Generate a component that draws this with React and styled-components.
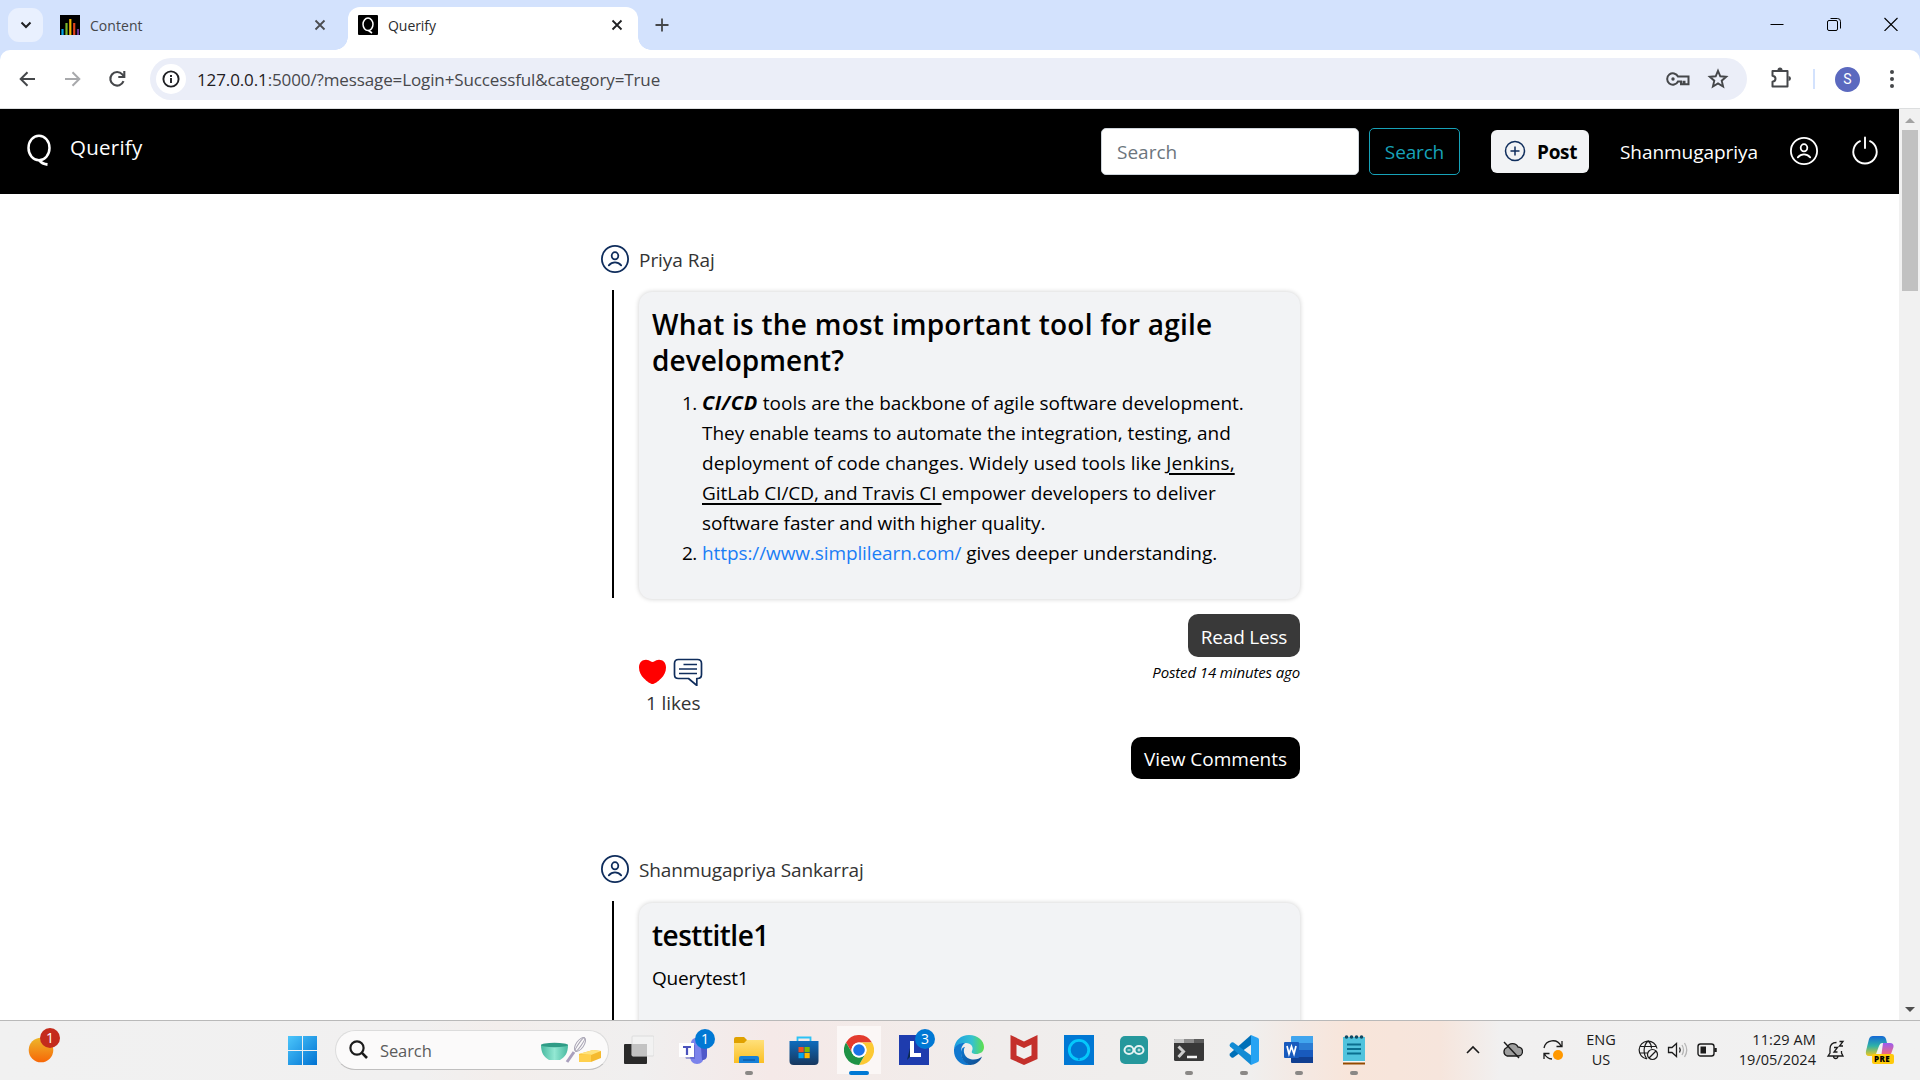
import React from "react";
import styled, { createGlobalStyle, css } from "styled-components";

const Global = createGlobalStyle`
  * { box-sizing: border-box; }
  html, body { margin: 0; padding: 0; overflow: hidden; background: #fff; }
  body { font-family: "Open Sans", "Noto Sans", sans-serif; font-size: 19px; line-height: 30px; color: #000; }
  svg { display: block; flex: none; }
`;

const Screen = styled.div`
  width: 1920px;
  height: 1080px;
  display: flex;
  flex-direction: column;
  overflow: hidden;
`;

const T = styled.span`
  white-space: nowrap;
  letter-spacing: ${(p) => p.$ls || 0}px;
`;

/* ---------- browser chrome ---------- */
const TabStrip = styled.div`
  height: 50px;
  flex: none;
  background: #d3e2fd;
  display: flex;
  align-items: flex-start;
  padding-left: 8px;
`;
const TabMenu = styled.div`
  width: 35px;
  height: 34px;
  margin-top: 8px;
  border-radius: 11px;
  background: #e9f0fe;
  display: flex;
  align-items: center;
  justify-content: center;
`;
const Tab = styled.div`
  position: relative;
  display: flex;
  align-items: center;
  height: 43px;
  margin-top: 7px;
  width: ${(p) => p.$w}px;
  padding: 0 14px 7px ${(p) => p.$pl}px;
  font-size: 14px;
  color: #45474a;
  ${(p) =>
    p.$active &&
    css`
      background: #fff;
      border-radius: 12px 12px 0 0;
      color: #2b2c2e;
      &::before,
      &::after {
        content: "";
        position: absolute;
        bottom: 0;
        width: 13px;
        height: 13px;
      }
      &::before {
        left: -13px;
        background: radial-gradient(circle at 0 0, #d3e2fd 12.5px, #fff 13px);
      }
      &::after {
        right: -13px;
        background: radial-gradient(circle at 100% 0, #d3e2fd 12.5px, #fff 13px);
      }
    `}
`;
const TabTitle = styled(T)`
  flex: 1;
  margin-left: 10px;
  padding-top: 1px;
`;
const NewTab = styled.div`
  margin: 18px 0 0 17px;
`;
const WindowButtons = styled.div`
  display: flex;
  gap: 43px;
  margin: 17px 22px 0 auto;
`;
const ToolbarBack = styled.div`
  background: #d3e2fd;
  height: 59px;
  flex: none;
`;
const Toolbar = styled.div`
  height: 59px;
  background: #fff;
  border-radius: 10px 10px 0 0;
  border-bottom: 1px solid #dcdedf;
  display: flex;
  align-items: center;
  padding: 0 19px 0 17px;
`;
const NavIcons = styled.div`
  display: flex;
  gap: 24px;
  margin-right: 22px;
`;
const UrlBar = styled.div`
  height: 42px;
  width: 1597px;
  border-radius: 21px;
  background: #ebeef8;
  display: flex;
  align-items: center;
  padding: 0 18px 0 6px;
`;
const SiteInfo = styled.div`
  width: 30px;
  height: 30px;
  border-radius: 50%;
  background: #fff;
  display: flex;
  align-items: center;
  justify-content: center;
  margin-right: 11px;
`;
const Url = styled(T)`
  flex: 1;
  padding-top: 1px;
  font-size: 17px;
  color: #47484c;
  b { font-weight: 400; color: #1f2023; }
`;
const UrlIcons = styled.div`
  display: flex;
  align-items: center;
  gap: 17px;
`;
const ToolbarDivider = styled.div`
  width: 2px;
  height: 20px;
  background: #d3e2fd;
  margin: 0 20px 0 20px;
`;
const Avatar = styled.div`
  width: 25px;
  height: 25px;
  border-radius: 50%;
  background: #5b69bf;
  color: #fff;
  font: 14px/25px Roboto, sans-serif;
  text-align: center;
  margin-right: 23px;
`;

/* ---------- page ---------- */
const Viewport = styled.div`
  height: 911px;
  flex: none;
  display: flex;
`;
const Page = styled.div`
  width: 1899px;
  height: 911px;
  overflow: hidden;
`;
const Scrollbar = styled.div`
  width: 21px;
  background: #f1f1f1;
  display: flex;
  flex-direction: column;
  align-items: center;
  justify-content: space-between;
  padding: 9px 0 8px;
`;
const Thumb = styled.div`
  width: 16px;
  height: 161px;
  margin: 7px 0 auto;
  background: #c1c1c1;
`;
const Navbar = styled.header`
  height: 85px;
  background: #000;
  color: #fff;
  display: flex;
  align-items: center;
  padding: 0 20px 1px 26px;
`;
const Brand = styled(T)`
  font-size: 20.5px;
  margin: -8px auto 0 17px;
`;
const SearchField = styled.div`
  width: 258px;
  height: 47px;
  border: 1px solid #ced4da;
  border-radius: 5px;
  background: #fff;
  color: #6c757d;
  padding: 8px 15px;
  line-height: 30px;
`;
const SearchButton = styled.div`
  width: 91px;
  height: 47px;
  margin-left: 10px;
  border: 1px solid #17a2b8;
  border-radius: 5px;
  color: #17a2b8;
  line-height: 46px;
  text-align: center;
`;
const PostButton = styled.div`
  width: 98px;
  height: 43px;
  margin: 0 31px 0 31px;
  border-radius: 6px;
  background: #f2f3f5;
  color: #000;
  font-weight: 700;
  display: flex;
  align-items: center;
  padding-left: 13px;
  gap: 11px;
`;
const Lowered = styled(T)`
  padding-top: 2px;
`;
const NavUser = styled(Lowered)`
  width: 138px;
  margin-right: 31px;
`;
const NavGap = styled.div`
  width: 32px;
`;
const Feed = styled.main`
  width: 702px;
  margin-left: 600px;
  padding-top: 50px;
`;
const Author = styled.div`
  height: 30px;
  display: flex;
  align-items: center;
  gap: 9px;
  color: #333;
  margin-bottom: ${(p) => p.$mb}px;
`;
const Thread = styled.div`
  display: flex;
  align-items: flex-start;
`;
const ThreadLine = styled.div`
  width: 2px;
  height: 308px;
  margin: -2px 25px 0 12px;
  background: #000;
`;
const Card = styled.section`
  width: 661px;
  height: 307px;
  border-radius: 13px;
  background: #f2f3f5;
  box-shadow: 0 0 5px rgba(0, 0, 0, 0.2);
  padding: 14px 13px;
`;
const Title = styled.h3`
  margin: 0 0 10px;
  font-size: 28px;
  font-weight: 600;
  line-height: 36px;
`;
const Answers = styled.div`
  display: grid;
  grid-template-columns: 50px 1fr;
`;
const Marker = styled.div`
  padding-left: 30px;
  letter-spacing: -0.5px;
`;
const Line = styled(T)`
  display: block;
  height: 30px;
  u { text-decoration-thickness: 2px; text-underline-offset: 3px; }
`;
const Strong = styled.em`
  font-weight: 700;
  font-size: 20px;
  letter-spacing: 0.6px;
  line-height: 1;
`;
const Link = styled.a`
  color: #1a7df5;
  letter-spacing: -0.1px;
`;
const PostFooter = styled.div`
  display: flex;
  justify-content: space-between;
  margin: 15px 2px 75px 38px;
  height: 165px;
`;
const Reactions = styled.div`
  padding-top: 44px;
  color: #333;
`;
const ReactionIcons = styled.div`
  display: flex;
  gap: 6px;
  margin-bottom: 2px;
`;
const LikeCount = styled(T)`
  margin-left: 8px;
`;
const PostActions = styled.div`
  display: flex;
  flex-direction: column;
  align-items: flex-end;
`;
const ActionButton = styled.div`
  width: ${(p) => p.$w}px;
  height: ${(p) => p.$h}px;
  border-radius: 10px;
  background: ${(p) => p.$bg};
  color: #fff;
  text-align: center;
  line-height: ${(p) => p.$h + 3}px;
`;
const Posted = styled(T)`
  font-size: 15px;
  font-style: italic;
  line-height: 30px;
  height: 80px;
`;

/* ---------- taskbar ---------- */
const Taskbar = styled.footer`
  height: 60px;
  flex: none;
  border-top: 1px solid #b9b9b9;
  background: linear-gradient(90deg, #f1f1f1 0, #f1f0f0 420px, #f3eeec 500px, #f0efef 640px, #f5e9e8 770px, #f3ebe9 870px, #f0edec 1000px, #f0efee 1250px, #f4e9e3 1300px, #f8e5da 1350px, #f6e5dc 1440px, #f1f0f0 1500px, #f1f1f1 100%);
  display: flex;
  align-items: center;
  padding: 0 0 1px 26px;
`;
const Widget = styled.div`
  width: 262px;
`;
const TaskSearch = styled.div`
  width: 274px;
  height: 40px;
  border-radius: 20px;
  border: 1px solid #dcdcdc;
  border-bottom-color: #c0bfbf;
  background: #fbfafa;
  display: flex;
  align-items: center;
  padding: 0 6px 0 13px;
  margin: 0 2px 0 17px;
  font-size: 16.5px;
  color: #5c5c5c;
`;
const TaskSearchText = styled(T)`
  flex: 1;
  margin-left: 11px;
  padding-top: 1px;
`;
const AppCell = styled.div`
  position: relative;
  width: 55px;
  height: 58px;
  display: flex;
  align-items: center;
  justify-content: center;
  ${(p) =>
    p.$state === "active" &&
    css`
      background: linear-gradient(#fbf7f6, #fbf7f6) center / 44px 48px no-repeat;
    `}
  ${(p) =>
    p.$state &&
    css`
      &::after {
        content: "";
        position: absolute;
        bottom: 4px;
        width: ${p.$state === "active" ? 20 : 8}px;
        height: 4px;
        border-radius: 2px;
        background: ${p.$state === "active" ? "#0078d4" : "#8a8886"};
      }
    `}
`;
const Badge = styled.div`
  position: absolute;
  z-index: 1;
  left: 29px;
  top: 8px;
  width: 20px;
  height: 20px;
  border-radius: 50%;
  background: #0078d4;
  color: #fff;
  font-size: 14px;
  line-height: 20px;
  text-align: center;
`;
const RedBadge = styled(Badge)`
  left: 14px;
  top: -9px;
  background: #c42b1c;
`;
const WidgetIcon = styled.div`
  position: relative;
  width: 30px;
`;
const Tray = styled.div`
  flex: 1;
  display: flex;
  align-items: center;
  padding-left: 84px;
`;
const TraySlot = styled.div`
  width: ${(p) => p.$w}px;
  margin-right: ${(p) => p.$mr || 0}px;
`;
const Stack = styled.div`
  width: ${(p) => p.$w}px;
  margin-right: ${(p) => p.$mr}px;
  display: flex;
  flex-direction: column;
  align-items: ${(p) => p.$align};
  font-size: 14.5px;
  line-height: 20px;
  padding-bottom: 1px;
  color: #1b1b1b;
`;

/* ---------- icons ---------- */
const UserIcon = ({ color = "#0f2d5c" }) => (
  <svg width="30" height="30" viewBox="0 0 30 30" fill="none" stroke={color} strokeWidth="1.8" strokeLinecap="round">
    <circle cx="15" cy="15" r="13.1" />
    <ellipse cx="15" cy="11.8" rx="3.3" ry="3.6" />
    <path d="M8.8 21.4C10.5 19.4 12.6 18.4 15 18.4s4.500 1 6.200 3" />
  </svg>
);
const Cross = ({ c }) => (
  <svg width="14" height="14" viewBox="0 0 14 14" stroke={c} strokeWidth="1.8">
    <path d="M2.5 2.5l9 9M11.5 2.5l-9 9" />
  </svg>
);

const apps = [
  { name: "taskview", icon: (
    <svg width="30" height="30"><rect x="0" y="9" width="23" height="20" rx="1" fill="#2a2a2a" /><rect x="8" y="1" width="22" height="20" rx="1" fill="#f2f2f2" stroke="#dcdcdc" /><path d="M8 9h15v12H8z" fill="#c3c3c3" /></svg>
  ) },
  { name: "teams", badge: "1", icon: (
    <svg width="30" height="30"><circle cx="17" cy="8" r="5" fill="#7b83eb" /><path d="M11 12h14v9c0 5-3 8-7 8s-7-3-7-8z" fill="#7b83eb" /><path d="M22 12h6v8c0 4-2 5-5 5z" fill="#5059c9" /><path d="M2 10h14v14H7z" fill="#4b53bc" opacity=".5" /><rect x="0" y="8" width="15" height="14" fill="#fff" /><path d="M4 11h8v2H9.100v7H6.900v-7H4z" fill="#4b53bc" /></svg>
  ) },
  { name: "explorer", state: "open", icon: (
    <svg width="30" height="30"><path d="M0 4a2 2 0 0 1 2-2h8l3 3v5H0z" fill="#e0a100" /><path d="M0 8h10l3-3h17v23H0z" fill="url(#fold)" /><path d="M5 23a2 2 0 0 1 2-2h16a2 2 0 0 1 2 2v5H5z" fill="#1680d8" /><path d="M9 25h12" stroke="#0a4a90" /><defs><linearGradient id="fold" x2="0" y2="1"><stop stopColor="#ffe07a" /><stop offset="1" stopColor="#fbbf24" /></linearGradient></defs></svg>
  ) },
  { name: "store", icon: (
    <svg width="30" height="30"><path d="M8.500 7V2.500h13V7" fill="none" stroke="#2cc2f5" strokeWidth="1.8" /><path d="M.5 6h29v20q0 4-4 4h-21q-4 0-4-4z" fill="url(#st)" /><path d="M9.500 12h5.200v5.200H9.500z" fill="#f25022" /><path d="M15.500 12h5.200v5.200h-5.200z" fill="#7fba00" /><path d="M9.500 18h5.200v5.200H9.500z" fill="#00a4ef" /><path d="M15.500 18h5.200v5.200h-5.200z" fill="#ffb900" /><defs><linearGradient id="st" x2="0" y2="1"><stop stopColor="#0f6cbd" /><stop offset="1" stopColor="#17375e" /></linearGradient></defs></svg>
  ) },
  { name: "chrome", state: "active", icon: (
    <svg width="30" height="30" viewBox="0 0 48 48"><circle cx="24" cy="24" r="24" fill="#fff" /><path d="M3.200 12A24 24 0 0 1 44.800 12H24a12 12 0 0 0-10.400 18z" fill="#e33b2e" /><path d="M44.800 12A24 24 0 0 1 24 48l10.400-18A12 12 0 0 0 24 12z" fill="#fcc934" /><path d="M24 48A24 24 0 0 1 3.200 12l10.400 18a12 12 0 0 0 20.800 0z" fill="#1e9245" /><circle cx="24" cy="24" r="12" fill="#fff" /><circle cx="24" cy="24" r="9.300" fill="#1a73e8" /></svg>
  ) },
  { name: "l", badge: "3", icon: (
    <svg width="30" height="30"><rect width="30" height="30" fill="#1e3cae" /><path d="M8 25l4-16v12z" fill="#0c2a50" /><path d="M11 6h4v12h7v4H11z" fill="#fff" /></svg>
  ) },
  { name: "edge", icon: (
    <svg width="30" height="30"><defs><linearGradient id="e1" x2="1" y2="0"><stop stopColor="#1b9de2" /><stop offset=".6" stopColor="#35c1d0" /><stop offset="1" stopColor="#5fe04a" /></linearGradient><linearGradient id="e2" x2="1" y2="1"><stop stopColor="#0d7ad4" /><stop offset="1" stopColor="#114a8b" /></linearGradient></defs><path d="M0 14C1 5 7 0 15 0c9 0 15 6 15 12 0 5-4 7-8 7-3 0-5-1-4-3 2-4-1-8-6-8-6 0-10 3-12 6z" fill="url(#e1)" /><path d="M0 14c2-4 6-6.500 11-6C8 10 7 13 7 17c0 7 5 12 11 12.700C8 32 0 25 0 16z" fill="#1178cf" /><path d="M11 12c-2 2-2 10 5 12 5 1.500 9 0 12-2.500C26 27 21 30 16 30 10 28 7 23 7 18c0-4 2-6 4-6z" fill="url(#e2)" /></svg>
  ) },
  { name: "mcafee", icon: (
    <svg width="28" height="30"><path d="M.5 0L14 6.500 27.500 0v24L14 30 .5 24z" fill="#c4302b" /><path d="M6.500 9.500L14 13l7.500-3.500v11L14 24l-7.500-3.500z" fill="#f1efee" /></svg>
  ) },
  { name: "alexa", icon: (
    <svg width="30" height="30"><rect width="30" height="30" fill="#0078d4" /><circle cx="15" cy="15" r="9.700" fill="none" stroke="#05c8fb" strokeWidth="2.800" /><path d="M13.500 23.500l1.500 2 1-2z" fill="#0078d4" /></svg>
  ) },
  { name: "arduino", icon: (
    <svg width="28" height="28"><rect width="28" height="28" rx="5" fill="#26989c" /><g fill="none" stroke="#e8f3f3" strokeWidth="2"><ellipse cx="9" cy="14" rx="4.500" ry="4" /><ellipse cx="19" cy="14" rx="4.500" ry="4" /><path d="M7.500 14h3M17.500 14h3M19 12.500v3" strokeWidth="1" /></g></svg>
  ) },
  { name: "terminal", state: "open", icon: (
    <svg width="30" height="30"><rect y="4" width="30" height="22" rx="1.500" fill="#383838" /><path d="M1 4h9v4H0V5z" fill="#c6c6c6" /><path d="M10 4h10v4H10z" fill="#8c8c8c" /><path d="M20 4h10v4H20z" fill="#5b5b5b" /><path d="M4.500 11.500l5 5-5 5.500" fill="none" stroke="#ccc" strokeWidth="3" /><path d="M13 22h10" stroke="#f4f4f4" strokeWidth="2.500" /></svg>
  ) },
  { name: "vscode", state: "open", icon: (
    <svg width="30" height="30"><path d="M22 0L1 18.500q-1 1.500 0 2.500l1.500 1.500q1 .5 2 0L23 9z" fill="#0070b8" /><path d="M22 30L1 11.500Q0 10 1 9l1.500-1.500q1-.5 2 0L23 21z" fill="#128bd4" /><path d="M22 0l7 3q1 .5 1 2v20q0 1.500-1 2l-7 3V0z" fill="#27a3f3" /></svg>
  ) },
  { name: "word", state: "open", icon: (
    <svg width="30" height="30"><path d="M7 2q0-1 1-1h21v7H7z" fill="#41a5ee" /><path d="M7 8h22v7H7z" fill="#2b7cd3" /><path d="M7 15h22v7H7z" fill="#185abd" /><path d="M7 22h22v6H8q-1 0-1-1z" fill="#103f91" /><rect x="0" y="7" width="15" height="16" rx="1" fill="#185abd" /><path d="M3 11l2 8 2.500-7.500L10 19l2-8" fill="none" stroke="#fff" strokeWidth="1.700" /></svg>
  ) },
  { name: "notepad", state: "open", icon: (
    <svg width="24" height="30"><path d="M1 2h22v25H1z" fill="#50c3dd" /><path d="M1 27h22v2.500H1z" fill="#944a00" /><path d="M1 26h22v1.500H1z" fill="#f6f6f6" /><path d="M5 9.500h14M5 14h14M5 18.500h14" stroke="#0a6f8f" strokeWidth="2" /><g fill="#124a63"><circle cx="4.500" cy="2" r="1.800" /><circle cx="9.500" cy="2" r="1.800" /><circle cx="14.500" cy="2" r="1.800" /><circle cx="19.500" cy="2" r="1.800" /></g></svg>
  ) },
];

function BrowserChrome() {
  return (
    <>
      <TabStrip>
        <TabMenu>
          <svg width="12" height="12" fill="none" stroke="#1f2023" strokeWidth="2"><path d="M1.500 3.500L6 8l4.500-4.500" /></svg>
        </TabMenu>
        <Tab $w={305} $pl={17}>
          <svg width="20" height="20"><rect width="20" height="20" fill="#000" /><path d="M2.500 20v-6" stroke="#00a3e8" strokeWidth="2.200" /><path d="M6.500 20V8" stroke="#7ab829" strokeWidth="2.200" /><path d="M10.300 20V4" stroke="#f2b400" strokeWidth="2.200" /><path d="M14.200 20V8" stroke="#e0421b" strokeWidth="2.200" /><path d="M18 20v-6" stroke="#6a3494" strokeWidth="2.200" /></svg>
          <TabTitle $ls={0.05}>Content</TabTitle>
          <svg width="26" height="14" stroke="#4a4c50" strokeWidth="1.8"><path d="M7.500 2.500l9 9M16.500 2.500l-9 9" /></svg>
        </Tab>
        <Tab $active $w={290} $pl={10}>
          <svg width="20" height="20"><rect width="20" height="20" rx="1" fill="#000" /><ellipse cx="10" cy="9.300" rx="5" ry="6.200" fill="none" stroke="#fff" strokeWidth="1.500" /><path d="M10.500 15.500l3.500 2.500" stroke="#fff" strokeWidth="1.600" /></svg>
          <TabTitle $ls={-0.05}>Querify</TabTitle>
          <Cross c="#202124" />
        </Tab>
        <NewTab>
          <svg width="14" height="14" stroke="#45474a" strokeWidth="1.800"><path d="M7 .5v13M.5 7h13" /></svg>
        </NewTab>
        <WindowButtons>
          <svg width="14" height="14" stroke="#000" strokeWidth="1"><path d="M.5 7.500h13" /></svg>
          <svg width="14" height="14" fill="none" stroke="#000"><rect x=".5" y="3.500" width="10" height="10" rx="1.500" /><path d="M3.500 1.500h7q3 0 3 3v7" /></svg>
          <svg width="14" height="14" stroke="#000" strokeWidth="1.100"><path d="M.5 1l13 13M13.500 1l-13 13" /></svg>
        </WindowButtons>
      </TabStrip>
      <ToolbarBack>
        <Toolbar>
          <NavIcons>
            <svg width="21" height="20" fill="none" stroke="#45474a" strokeWidth="2"><path d="M18 10H4M10.500 3.200L3.700 10l6.800 6.800" /></svg>
            <svg width="21" height="20" fill="none" stroke="#a8a9ac" strokeWidth="2"><path d="M3 10h14M10.500 3.200l6.800 6.800-6.800 6.800" /></svg>
            <svg width="21" height="20" fill="none" stroke="#45474a" strokeWidth="2.100"><path d="M16.500 12.200A6.800 6.800 0 1 1 15.300 5.400L17 7.200" /><path d="M17.300 2v6h-6" /></svg>
          </NavIcons>
          <UrlBar>
            <SiteInfo>
              <svg width="18" height="18" fill="none" stroke="#1f2023" strokeWidth="1.900"><circle cx="9" cy="9" r="7.600" /><path d="M9 8v5M9 5v2" /></svg>
            </SiteInfo>
            <Url $ls={-0.12}><b>127.0.0.1</b>:5000/?message=Login+Successful&amp;category=True</Url>
            <UrlIcons>
              <svg width="24" height="16" fill="none" stroke="#45474a" strokeWidth="2"><path d="M12 5.500A5.700 5.700 0 1 0 12 10.500H15V13.300h2.500v-2.500h1v2.500H22.500v-7.800z" /><circle cx="7" cy="8" r="1.700" fill="#45474a" stroke="none" /></svg>
              <svg width="22" height="22" fill="none" stroke="#45474a" strokeWidth="1.900"><path d="M11 2.800l2.300 5.500 5.900.5-4.500 3.900 1.400 5.800L11 15.400l-5.100 3.100 1.400-5.800-4.500-3.900 5.900-.5z" /></svg>
            </UrlIcons>
          </UrlBar>
          <svg width="46" height="24" viewBox="-22 0 46 24" fill="none" stroke="#45474a" strokeWidth="2"><path d="M3.500 4h15v15.500h-15v-4.700q3-.5 3-3t-3-3z" strokeLinejoin="round" /><path d="M8.500 3a2.500 2.500 0 0 1 5 0zM19.500 9a2.500 2.500 0 0 1 0 5z" fill="#45474a" stroke="none" /></svg>
          <ToolbarDivider />
          <Avatar>S</Avatar>
          <svg width="18" height="20" fill="#45474a"><circle cx="9" cy="3" r="2" /><circle cx="9" cy="10" r="2" /><circle cx="9" cy="17" r="2" /></svg>
        </Toolbar>
      </ToolbarBack>
    </>
  );
}

function TopNav() {
  return (
    <Navbar>
      <svg width="27" height="34" viewBox="0 0 27 34" fill="none" stroke="#fff"><ellipse cx="13" cy="14" rx="10.500" ry="12.300" strokeWidth="2.500" /><path d="M13.500 26.500q2.500 3.500 8 4" strokeWidth="2.900" /></svg>
      <Brand $ls={0.25}>Querify</Brand>
      <SearchField><T>Search</T></SearchField>
      <SearchButton><T $ls={-0.15}>Search</T></SearchButton>
      <PostButton>
        <svg width="22" height="22" fill="none" stroke="#0f2d5c" strokeWidth="1.500"><circle cx="11" cy="11" r="9.500" /><path d="M11 6.500v9M6.500 11h9" /></svg>
        <Lowered $ls={-0.3}>Post</Lowered>
      </PostButton>
      <NavUser $ls={-0.05}>Shanmugapriya</NavUser>
      <UserIcon color="#fff" />
      <NavGap />
      <svg width="28" height="30" fill="none" stroke="#fff" strokeWidth="1.900" strokeLinecap="round"><path d="M14 1.500v10.500" /><path d="M9 5.200A11.700 11.700 0 1 0 19 5.200" /></svg>
    </Navbar>
  );
}

function FeedView() {
  return (
    <Feed>
      <Author $mb={18}><UserIcon /><Lowered $ls={-0.05}>Priya Raj</Lowered></Author>
      <Thread>
        <ThreadLine />
        <Card>
          <Title><T $ls={0.24}>What is the most important tool for agile</T><br /><T $ls={0.05}>development?</T></Title>
          <Answers>
            <Marker>1.</Marker>
            <div>
              <Line><Strong>CI/CD</Strong> tools are the backbone of agile software development.</Line>
              <Line $ls={-0.03}>They enable teams to automate the integration, testing, and</Line>
              <Line $ls={0.08}>deployment of code changes. Widely used tools like <u>Jenkins,</u></Line>
              <Line $ls={-0.03}><u>GitLab CI/CD, and Travis CI </u>empower developers to deliver</Line>
              <Line $ls={-0.08}>software faster and with higher quality.</Line>
            </div>
            <Marker>2.</Marker>
            <Line $ls={-0.04}><Link>https://www.simplilearn.com/</Link> gives deeper understanding.</Line>
          </Answers>
        </Card>
      </Thread>
      <PostFooter>
        <Reactions>
          <ReactionIcons>
            <svg width="29" height="28" fill="red"><path d="M14.500 26C12.500 26 9 23.500 6 20.500 3 17.500 1 14 1 9.500 1 4.500 4.200 1.800 8 1.800q3 0 4.500 1.500 2 1.500 4 0Q18 1.800 21 1.800c3.800 0 7 2.700 7 7.700 0 4.500-2 8-5 11S16.500 26 14.500 26z" /></svg>
            <svg width="30" height="28" fill="none" stroke="#0f2d5c" strokeWidth="1.700" strokeLinejoin="round"><path d="M5.500 1.500h19q4 0 4 4v11q0 4-4 4h-.7v7l-8.300-7h-10q-4 0-4-4v-11q0-4 4-4z" /><path d="M10.500 6.500H24M6 11H24M6 15.500H24" /></svg>
          </ReactionIcons>
          <LikeCount $ls={-0.1}>1 likes</LikeCount>
        </Reactions>
        <PostActions>
          <ActionButton $w={112} $h={43} $bg="#393939"><T $ls={-0.2}>Read Less</T></ActionButton>
          <Posted $ls={-0.13}>Posted 14 minutes ago</Posted>
          <ActionButton $w={169} $h={42} $bg="#000"><T>View Comments</T></ActionButton>
        </PostActions>
      </PostFooter>
      <Author $mb={19}><UserIcon /><Lowered $ls={-0.13}>Shanmugapriya Sankarraj</Lowered></Author>
      <Thread>
        <ThreadLine />
        <Card>
          <Title><T $ls={-0.5}>testtitle1</T></Title>
          <T $ls={-0.2}>Querytest1</T>
        </Card>
      </Thread>
    </Feed>
  );
}

function WindowsTaskbar() {
  return (
    <Taskbar>
      <Widget>
        <WidgetIcon>
          <svg width="30" height="26"><defs><linearGradient id="wg" x2="0" y2="1"><stop stopColor="#edb72b" /><stop offset="1" stopColor="#f76707" /></linearGradient></defs><circle cx="15" cy="13" r="12.300" fill="url(#wg)" /></svg>
          <RedBadge>1</RedBadge>
        </WidgetIcon>
      </Widget>
      <svg width="30" height="30"><defs><linearGradient id="win" x2="1" y2="1"><stop stopColor="#4cc6fb" /><stop offset="1" stopColor="#0072d2" /></linearGradient></defs><path d="M0 1h14v14H0zM15 1h14v14H15zM0 16h14v14H0zM15 16h14v14H15z" fill="url(#win)" /></svg>
      <TaskSearch>
        <svg width="20" height="20" fill="none" stroke="#1b1b1b" strokeWidth="2.200"><circle cx="8" cy="8" r="6.600" /><path d="M12.700 12.700L18 18" strokeWidth="2.600" /></svg>
        <TaskSearchText $ls={-0.1}>Search</TaskSearchText>
        <svg width="62" height="28"><defs><linearGradient id="bowl" x2="1"><stop stopColor="#48b9a0" /><stop offset=".5" stopColor="#93e8d3" /><stop offset="1" stopColor="#48b9a0" /></linearGradient></defs><path d="M1 9h27c0 8-3 12-8 15h-11C4 21 1 17 1 9z" fill="url(#bowl)" /><ellipse cx="14.500" cy="9" rx="13.500" ry="2.200" fill="#2f9c86" /><path d="M27 26l7-10" stroke="#a99fbd" strokeWidth="3" /><g fill="none" stroke="#a9a5b5"><ellipse cx="40" cy="8.500" rx="3.800" ry="8" transform="rotate(35 40 8.500)" /><ellipse cx="40" cy="8.500" rx="1.500" ry="8" transform="rotate(35 40 8.500)" /></g><path d="M39 18l14-4 8 1v7l-10 4H39z" fill="#f5ba2e" /><path d="M39 18l14-4 8 1-10 4z" fill="#ffe27a" /><path d="M39 18.500h12V26H39z" fill="#ffd04d" /></svg>
      </TaskSearch>
      {apps.map((a) => (
        <AppCell key={a.name} $state={a.state}>
          {a.icon}
          {a.badge && <Badge>{a.badge}</Badge>}
        </AppCell>
      ))}
      <Tray>
        <TraySlot $w={16} $mr={20}><svg width="16" height="10" fill="none" stroke="#1b1b1b" strokeWidth="1.600"><path d="M2 8l6-6 6 6" /></svg></TraySlot>
        <TraySlot $w={22} $mr={19}><svg width="22" height="20"><path d="M6 16a4.500 4.500 0 0 1 0-8.500 6 6 0 0 1 11-.5 4.500 4.500 0 0 1 0 9z" fill="#9e9e9e" stroke="#1b1b1b" strokeWidth="1.300" /><path d="M3 2l15 16" stroke="#1b1b1b" strokeWidth="1.400" /></svg></TraySlot>
        <TraySlot $w={22} $mr={14}><svg width="22" height="22" fill="none" stroke="#1b1b1b" strokeWidth="1.300"><path d="M2 9a9 9 0 0 1 17-2M20 2v5.500h-5.500M10 20a9 9 0 0 1-7.500-5M2 20v-5.500h5.500" /><circle cx="16" cy="16" r="5" fill="#ff9800" stroke="none" /></svg></TraySlot>
        <Stack $w={46} $mr={13} $align="center"><T>ENG</T><T>US</T></Stack>
        <TraySlot $w={22} $mr={8}><svg width="22" height="22" fill="none" stroke="#1b1b1b" strokeWidth="1.200"><path d="M20 9.500A9 9 0 1 0 10 20M2.500 7.500h17M2.500 14h8M10 20c-4-5-4-13 1-18M11 2c2.500 2 3.500 4.500 3.500 7.500" /><circle cx="15.500" cy="15.500" r="5" /><path d="M12 19l7-7" /></svg></TraySlot>
        <TraySlot $w={22} $mr={8}><svg width="22" height="20" fill="none" stroke="#1b1b1b" strokeWidth="1.300"><path d="M1.500 7.500H5L9.500 3.500v13L5 12.500H1.500z" /><path d="M12.500 7.500q1.500 2.500 0 5" /><path d="M15 5q3 5 0 10M17.500 3q4.500 7 0 14" stroke="#b5b5b5" /></svg></TraySlot>
        <TraySlot $w={22} $mr={13}><svg width="22" height="16" fill="none" stroke="#1b1b1b" strokeWidth="1.400"><rect x="1" y="2" width="16" height="12" rx="2.500" /><path d="M3.500 4.500H9v7H3.500z" fill="#1b1b1b" stroke="none" /><path d="M18.500 6v4" strokeWidth="2.500" /></svg></TraySlot>
        <Stack $w={84} $mr={10} $align="flex-end"><T $ls={0.1}>11:29 AM</T><T $ls={0.03}>19/05/2024</T></Stack>
        <TraySlot $w={20} $mr={19}><svg width="20" height="22" fill="none" stroke="#1b1b1b" strokeWidth="1.300"><path d="M10.500 3.500C6 3.500 4 6 4 10v4L2 17h15l-1.500-3v-2M7.500 17q0 2.500 2.200 2.500T12 17" /><path d="M8 8.500h3.500L8 13h3.500M13.500 2.500H17l-3.500 4.500H17" /></svg></TraySlot>
        <svg width="30" height="30"><defs><linearGradient id="c1" x2="0" y2="1"><stop stopColor="#1468d6" /><stop offset=".5" stopColor="#2fb2a8" /><stop offset="1" stopColor="#f2c81a" /></linearGradient><linearGradient id="c2" x2="0" y2="1"><stop stopColor="#9b5cf0" /><stop offset="1" stopColor="#ff6b6b" /></linearGradient></defs><path d="M8 1h9q3 0 4 3l1 4h-5q-2 0-3 3l-3 8q-1 2-4 2H4q-4 0-3-5L4 4q1-3 4-3z" fill="url(#c1)" /><path d="M18 8h7q4 0 3.500 4l-2.500 7q-1 2-4 2h-8q2 0 2.500-2z" fill="url(#c2)" /><rect x="7" y="19" width="22" height="10" rx="2" fill="#ffca0a" /><text x="9" y="27" fontFamily="Open Sans, sans-serif" fontWeight="800" fontSize="8" letterSpacing=".4">PRE</text></svg>
      </Tray>
    </Taskbar>
  );
}

export default function App() {
  return (
    <Screen>
      <Global />
      <BrowserChrome />
      <Viewport>
        <Page>
          <TopNav />
          <FeedView />
        </Page>
        <Scrollbar>
          <svg width="10" height="5" fill="#a3a3a3"><path d="M0 5l5-5 5 5z" /></svg>
          <Thumb />
          <svg width="10" height="5" fill="#505050"><path d="M0 0h10L5 5z" /></svg>
        </Scrollbar>
      </Viewport>
      <WindowsTaskbar />
    </Screen>
  );
}
